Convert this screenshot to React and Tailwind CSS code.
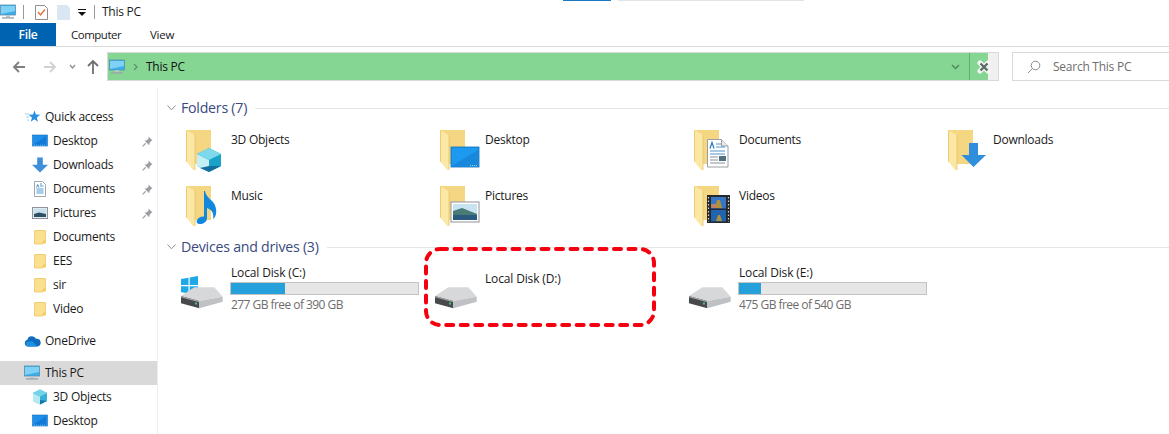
import React from "react";

const Monitor = ({ s = 16 }) => (
  <svg width={s} height={s} viewBox="0 0 16 16" className="shrink-0">
    <rect x="0.5" y="1" width="15" height="10" fill="#39b0ec" stroke="#5a8fb0" strokeWidth="0.8" />
    <path d="M1 2h14v5L1 10z" fill="#7fd1f5" />
    <rect x="6" y="11" width="4" height="2" fill="#b9c3c9" />
    <rect x="2" y="13.2" width="12" height="1.4" fill="#9aa5ab" />
  </svg>
);

const SmallFolder = () => (
  <svg width="16" height="16" viewBox="0 0 16 16" className="shrink-0">
    <path d="M2.5 1.5h11v12h-3v1.5h-8z" fill="#fbe08f" stroke="#ecc765" strokeWidth="0.8" />
    <path d="M11 11.5h2.5v3H11z" fill="#f3c94f" />
  </svg>
);

const Desktop16 = () => (
  <svg width="16" height="16" viewBox="0 0 16 16" className="shrink-0">
    <rect x="0.5" y="2" width="15" height="11" fill="#1e90ec" stroke="#0f6fbf" strokeWidth="0.6" />
    <path d="M1 12L14 3v9z" fill="#1179d6" />
    <path d="M2 12.2h12" stroke="#bfe2fa" strokeWidth="0.6" strokeDasharray="1 1" />
  </svg>
);

const Down16 = () => (
  <svg width="16" height="16" viewBox="0 0 16 16" className="shrink-0">
    <path d="M5.2 0.5h5.6v7.2H16L8 15.5 0 7.7h5.2z" fill="#3d8fd9" />
  </svg>
);

const Doc16 = () => (
  <svg width="16" height="16" viewBox="0 0 16 16" className="shrink-0">
    <path d="M2.5 0.5h8l3 3v12h-11z" fill="#fff" stroke="#8b8f94" strokeWidth="0.8" />
    <path d="M8 3h2M8 5h3.5M4.5 8h7M4.5 10h7M4.5 12h7" stroke="#3b8cc9" strokeWidth="0.9" />
    <path d="M4.5 6.5l1.2-3 1.2 3" stroke="#2b75b5" strokeWidth="0.8" fill="none" />
  </svg>
);

const Pic16 = () => (
  <svg width="16" height="16" viewBox="0 0 16 16" className="shrink-0">
    <rect x="0.5" y="2.5" width="15" height="11" fill="#dfeaf2" stroke="#8e9499" />
    <rect x="2" y="4" width="12" height="8" fill="#c9e0ef" />
    <path d="M2 9l5-1.5 7 1.5v3H2z" fill="#2f5063" />
  </svg>
);

const Cube16 = () => (
  <svg width="16" height="16" viewBox="0 0 16 16" className="shrink-0">
    <path d="M8 0.5l7 3.5v8l-7 3.5L1 12V4z" fill="#36b2d8" />
    <path d="M1 4l7 3.5v8L1 12z" fill="#b5e9f4" />
    <path d="M8 0.5l7 3.5-7 3.5L1 4z" fill="#75d3e8" />
    <path d="M8 11l7 1-7 3.5z" fill="#1477a8" />
  </svg>
);

const Pin = () => (
  <svg width="11" height="11" viewBox="0 0 10 10" className="shrink-0">
    <path d="M6 0.5l3.5 3.5-1.2 0.6-1.6 2.2-0.2 1.7L2.2 4.2l1.7-0.2 2.1-1.6z" fill="#9a9da1" />
    <path d="M3.4 6.6L0.6 9.4" stroke="#9a9da1" strokeWidth="1" />
  </svg>
);

const Star = () => (
  <svg width="16" height="16" viewBox="0 0 16 16" className="shrink-0">
    <path d="M9.5 1.5l1.4 4.1 4.4 0.2-3.5 2.7 1.2 4.3-3.6-2.5-3.7 2.500 1.300-4.300-3.500-2.700 4.500-0.200z" fill="#2a8fe0" />
    <path d="M0 5h4M1 8h3M2 11h2" stroke="#8cc8f0" strokeWidth="0.8" />
  </svg>
);

const Cloud = () => (
  <svg width="17" height="12" viewBox="0 0 17 12" className="shrink-0">
    <path d="M4 11.5a3.4 3.4 0 0 1-.6-6.7A4.6 4.6 0 0 1 12 3.8a3.9 3.9 0 0 1 1.4 7.7z" fill="#0f6cbd" />
    <path d="M4 11.5a2.4 2.4 0 0 1-.6-4.7L8 6l5.5 5.5z" fill="#1c8fe0" />
  </svg>
);

const Row = ({ icon, label, pin, indent = "pl-[32px]", gap = "gap-[5px]", active }) => (
  <div className={`flex h-6 items-center ${indent} ${gap} ${active ? "bg-[#d9d9d9]" : ""}`}>
    {icon}
    <span className="flex-1 truncate">{label}</span>
    {pin && <span className="mr-[4px]"><Pin /></span>}
  </div>
);

const Overlays = {
  cube: (
    <g>
      <path d="M27 22l12 6v12l-12 6-12-6V28z" fill="#1aa2c8" />
      <path d="M15 28l12 6v12l-12-6z" fill="#c3eff7" />
      <path d="M27 22l12 6-12 6-12-6z" fill="#7ed9ea" />
      <path d="M27 40l12 0-12 6-9-4z" fill="#126f9e" />
    </g>
  ),
  monitor: (
    <g>
      <rect x="15" y="21" width="28" height="20" fill="#1b9af0" stroke="#0e6db5" strokeWidth="0.8" />
      <path d="M16 40L42 24v16z" fill="#1788dc" />
      <path d="M34 39.600h8" stroke="#d7efff" strokeWidth="0.8" strokeDasharray="1 1" />
    </g>
  ),
  doc: (
    <g>
      <path d="M17.500 13.500h14l6.500 6.500v21H17.500z" fill="#fff" stroke="#9a9ea3" />
      <path d="M31.500 13.500V20H38" fill="#e8ecef" stroke="#9a9ea3" />
      <path d="M20 22.500l2-6 2 6" fill="none" stroke="#2a78c4" strokeWidth="1.200" />
      <path d="M26 18h5M26 21h9M20 25h15M20 28h15" stroke="#4a95d2" />
      <path d="M20 31h8M20 34h8M20 37h15" stroke="#8a9299" />
      <rect x="29" y="30" width="7" height="5" fill="#53707f" />
    </g>
  ),
  arrow: <path d="M25 17h9v12h8L29.500 41 17.500 29H25z" fill="#2f8fdd" />,
  note: (
    <path d="M23 9c1 5 4 7 7 10s5 8 4 13c-.4 2-1.500 4-3 5 1-4 0-9-6-11v10c0 4-4 6-7 6s-4-2-3-4 4-4 7-3.500V9z" fill="#1188dd" />
  ),
  pic: (
    <g>
      <rect x="15" y="20" width="28" height="20" fill="#fff" stroke="#a0a4a8" strokeWidth="1.200" />
      <rect x="17" y="22" width="24" height="16" fill="#c7e2f0" />
      <path d="M17 29l9-3 15 6v6H17z" fill="#4a7a76" />
      <path d="M17 33h24v5H17z" fill="#2b5a80" />
    </g>
  ),
  film: (
    <g>
      <rect x="17" y="13" width="23" height="28" fill="#26282c" />
      <rect x="21" y="15" width="15" height="11.500" fill="#3576c6" />
      <rect x="21" y="28" width="15" height="11.500" fill="#2063ae" />
      <path d="M25 26l2-8h3l2 8z" fill="#b28f3c" />
      <path d="M26 39l2-6h2l2 6z" fill="#b28f3c" />
      <path d="M21 22h5v4h-5z" fill="#b9826b" />
      <path d="M18.500 15v25M38.500 15v25" stroke="#d7d7d7" strokeWidth="1.200" strokeDasharray="1.500 2" />
    </g>
  ),
};

const FolderIcon = ({ overlay }) => (
  <svg width="48" height="48" viewBox="0 0 48 48" className="shrink-0">
    <path d="M4 4h25v34H13z" fill="#f5d682" />
    <path d="M4 4l9 5v35h-2l-7-9z" fill="#fbe7a6" />
    <path d="M4 4v31l1 1.500V5z" fill="#efca6e" />
    <path d="M13 9v35" stroke="#e9c469" strokeWidth="0.8" />
    {Overlays[overlay]}
  </svg>
);

const FolderItem = ({ label, overlay }) => (
  <div className="flex h-14 items-start pt-1">
    <FolderIcon overlay={overlay} />
    <span className="ml-px mt-[6px] text-[12px] leading-4 tracking-[-0.25px] text-[#1a1a1a]">{label}</span>
  </div>
);

const SectionHeader = ({ title }) => (
  <div className="flex h-5 items-center">
    <svg width="9" height="6" viewBox="0 0 9 6" className="ml-[9px] shrink-0">
      <path d="M0.500 0.500L4.500 4.800 8.500 0.500" fill="none" stroke="#8d8d8d" />
    </svg>
    <span className="ml-[5px] text-[14.200px] leading-5 text-[#3a4a80]">{title}</span>
    <div className="ml-[8px] h-px flex-1 bg-[#e5e5e5]" />
  </div>
);

const HddIcon = ({ win }) => (
  <svg width="48" height="48" viewBox="0 0 48 48" className="shrink-0 overflow-visible">
    {win && (
      <g fill="#1fa8e8">
        <path d="M-1 15l7.500-1.200v7.200H-1z" />
        <path d="M7.700 13.500L16 12v9H7.700z" />
        <path d="M-1 22.300h7.500v7L-1 28.200z" />
        <path d="M7.700 22.300H16V31l-8.300-1.400z" />
      </g>
    )}
    <path d="M-1 32l13.300-8.700h20l8.400 9.400L17.300 37z" fill="#d6d8da" />
    <path d="M-1 32l18.300 5v7.300L-1 39.300z" fill="#47494c" />
    <path d="M-1 32l18.300 5v1.200L-1 33.200z" fill="#a5a7aa" />
    <path d="M17.300 37l23.400-4.300v5l-23.400 6.600z" fill="#bfc1c4" />
    <rect x="13" y="38.500" width="2" height="2" fill="#46c47a" />
  </svg>
);

const Drive = ({ label, free, pct, bar = true }) => (
  <div className="flex h-[56px] items-start">
    <HddIcon win={label.includes("C:")} />
    <div className="ml-px flex w-[189px] flex-col">
      <span className={`text-[12px] leading-[18px] tracking-[-0.15px] text-[#1a1a1a] ${bar ? "" : "mt-[6px]"}`}>{label}</span>
      {bar && (
        <>
          <div className="-ml-px h-[13px] w-full border border-[#c4c4c4] bg-[#e6e6e6]">
            <div className="h-full bg-[#26a0da]" style={{ width: pct }} />
          </div>
          <span className="mt-px text-[12px] leading-[17px] tracking-[-0.55px] text-[#6d6d6d]">{free}</span>
        </>
      )}
    </div>
  </div>
);

export default function App() {
  return (
    <div className="relative flex h-[434px] w-[1169px] flex-col overflow-hidden bg-white font-['Open_Sans','Noto_Sans',sans-serif] text-[12px] tracking-[-0.25px] text-[#1a1a1a]">
      {/* window top strip */}
      <div className="flex h-px">
        <div className="ml-[563px] w-[48px] bg-[#1a78c2]" />
        <div className="ml-[7px] w-[186px] bg-[#e3e3e3]" />
      </div>

      {/* quick access toolbar */}
      <div className="flex h-[22px] items-center">
        <Monitor />
        <div className="ml-[7px] h-[14px] w-px bg-[#9a9a9a]" />
        <svg width="13" height="16" viewBox="0 0 13 16" className="ml-[11px]">
          <path d="M0.500 1.500h9l3 3v11h-12z" fill="#fff" stroke="#8f8f8f" />
          <path d="M3 8l2.500 3L10 5.500" fill="none" stroke="#e0703a" strokeWidth="1.400" />
        </svg>
        <svg width="13" height="16" viewBox="0 0 13 16" className="ml-[9px]">
          <path d="M0 1h10l3 3v12H0z" fill="#dbe6f4" />
        </svg>
        <svg width="8" height="7" viewBox="0 0 8 7" className="ml-[8px]">
          <path d="M0 0h8v1H0zM0 3h8L4 7z" fill="#111" />
        </svg>
        <div className="ml-[8px] h-[14px] w-px bg-[#9a9a9a]" />
        <span className="ml-[7px] text-[12px]">This PC</span>
      </div>

      {/* ribbon tabs */}
      <div className="flex h-[24px] items-stretch border-b border-[#dadada]">
        <div className="flex w-[56px] items-center justify-center bg-[#0063b1] font-semibold text-white">File</div>
        <span className="ml-[15px] flex w-[50px] items-center text-[11.500px] tracking-[-0.5px]">Computer</span>
        <span className="ml-[29px] flex items-center text-[11.500px]">View</span>
      </div>

      {/* address row */}
      <div className="flex h-[41px] items-start pt-[5px]">
        <svg width="107" height="29" viewBox="0 0 107 29" className="shrink-0">
          <path d="M25 15H14M19 10l-5 5 5 5" fill="none" stroke="#7f7f7f" strokeWidth="1.800" />
          <path d="M44 15H54M50 10l5 5-5 5" fill="none" stroke="#d2d2d2" strokeWidth="1.800" />
          <path d="M70 13l2.500 3 2.500-3" fill="none" stroke="#8f8f8f" strokeWidth="1.300" />
          <path d="M93 22V10M88 14l5-5 5 5" fill="none" stroke="#6f6f6f" strokeWidth="1.800" />
        </svg>
        <div className="flex h-[29px] w-[892px] items-stretch border border-[#d9d9d9] bg-[#f0f0f0]">
          <div className="flex w-[880px] items-center bg-[#86d693]">
            <span className="ml-px"><Monitor /></span>
            <svg width="5" height="8" viewBox="0 0 5 8" className="ml-[8px]">
              <path d="M1 1l3 3-3 3" fill="none" stroke="#5f8f6a" strokeWidth="1.200" />
            </svg>
            <span className="ml-[8px] flex-1 text-[#111]">This PC</span>
            <svg width="9" height="6" viewBox="0 0 9 6" className="mr-[9px]">
              <path d="M1 1l3.500 3.500L8 1" fill="none" stroke="#4f8a5c" strokeWidth="1.500" />
            </svg>
            <div className="mr-[18px] h-full w-px bg-[#5fae6e]" />
          </div>
          <svg width="14" height="14" viewBox="0 0 14 14" className="-ml-[11px] mt-[7px]">
            <path d="M3 3l8 8M11 3l-8 8" stroke="#f4f8f4" strokeWidth="5" strokeLinecap="round" />
            <path d="M3.500 3.500l7 7M10.500 3.500l-7 7" stroke="#5e6a66" strokeWidth="2.400" />
          </svg>
        </div>
        <div className="ml-[13px] flex h-[29px] flex-1 items-center border border-r-0 border-[#d9d9d9] pl-[14px]">
          <svg width="14" height="14" viewBox="0 0 14 14" className="shrink-0">
            <circle cx="8.500" cy="5.500" r="4.300" fill="none" stroke="#8a8a8a" />
            <path d="M5.300 8.500L1 13" stroke="#8a8a8a" />
          </svg>
          <span className="ml-[12px] text-[#6d6d6d]">Search This PC</span>
        </div>
      </div>

      <div className="flex min-h-0 flex-1">
        {/* nav pane */}
        <div className="w-[158px] shrink-0 border-r border-[#eeeeee] pt-[17px]">
          <Row icon={<Star />} label="Quick access" indent="pl-[25px]" gap="gap-[4px]" />
          <Row icon={<Desktop16 />} label="Desktop" pin />
          <Row icon={<Down16 />} label="Downloads" pin />
          <Row icon={<Doc16 />} label="Documents" pin />
          <Row icon={<Pic16 />} label="Pictures" pin />
          <Row icon={<SmallFolder />} label="Documents" />
          <Row icon={<SmallFolder />} label="EES" />
          <Row icon={<SmallFolder />} label="sir" />
          <Row icon={<SmallFolder />} label="Video" />
          <div className="h-2" />
          <Row icon={<Cloud />} label="OneDrive" indent="pl-[24px]" gap="gap-[4px]" />
          <div className="h-2" />
          <Row icon={<Monitor />} label="This PC" indent="pl-[24px]" gap="gap-[5px]" active />
          <Row icon={<Cube16 />} label="3D Objects" />
          <Row icon={<Desktop16 />} label="Desktop" />
        </div>

        {/* content */}
        <div className="flex-1 pt-[10px]">
          <SectionHeader title="Folders (7)" />
          <div className="mt-[4px] grid grid-cols-[repeat(4,254px)] pl-[24px]">
            <FolderItem label="3D Objects" overlay="cube" />
            <FolderItem label="Desktop" overlay="monitor" />
            <FolderItem label="Documents" overlay="doc" />
            <FolderItem label="Downloads" overlay="arrow" />
            <FolderItem label="Music" overlay="note" />
            <FolderItem label="Pictures" overlay="pic" />
            <FolderItem label="Videos" overlay="film" />
          </div>
          <div className="mt-[3px]">
            <SectionHeader title="Devices and drives (3)" />
          </div>
          <div className="mt-[7px] grid grid-cols-[repeat(3,254px)] pl-[24px]">
            <Drive label="Local Disk (C:)" free="277 GB free of 390 GB" pct="29%" />
            <Drive label="Local Disk (D:)" bar={false} />
            <Drive label="Local Disk (E:)" free="475 GB free of 540 GB" pct="12%" />
          </div>
        </div>
      </div>

      {/* red annotation */}
      <svg width="234" height="82" viewBox="0 0 234 82" className="pointer-events-none absolute left-[423px] top-[246px]">
        <rect x="3" y="3" width="228" height="76" rx="14" fill="none" stroke="#f5000f" strokeWidth="4" strokeLinecap="round" strokeDasharray="7 7.500" />
      </svg>
    </div>
  );
}
